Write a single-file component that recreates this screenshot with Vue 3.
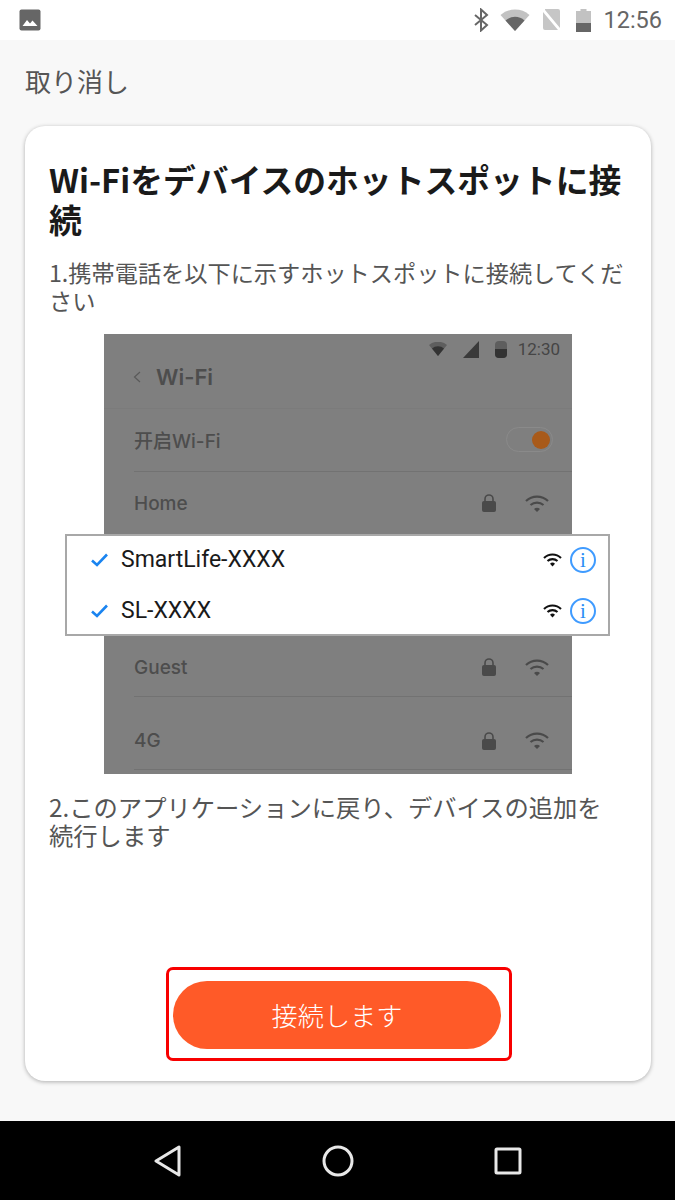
<script setup>
const upper = [{ name: '开启Wi-Fi', toggle: true, cls: 'switch-row' }, { name: 'Home', cls: 'home' }]
const lower = [{ name: 'Guest', cls: 'guest' }, { name: '4G', cls: 'fourg' }]
const networks = ['SmartLife-XXXX', 'SL-XXXX']
</script>

<template>
  <div class="page">
    <div class="status">
      <svg class="photo" width="22" height="22" viewBox="0 0 22 22">
        <rect x="0.5" y="0.5" width="21" height="21" rx="2" fill="#666" />
        <path d="M3.5 17 L8 11 L11 14.5 L13.5 11.5 L18.5 17 Z" fill="#fff" />
      </svg>
      <div class="status-right">
        <svg width="16" height="24" viewBox="0 0 16 24" fill="none" stroke="#666" stroke-width="2">
          <path d="M2 7 L14 17 L8 22.5 V1.5 L14 7 L2 17" />
        </svg>
        <svg width="30" height="22" viewBox="0 0 30 22">
          <path d="M0.5 6 A22 22 0 0 1 29.5 6 L15 22 Z" fill="#c2c2c2" />
          <path d="M5.5 11.5 A14 14 0 0 1 24.5 11.5 L15 22 Z" fill="#666" />
        </svg>
        <svg width="20" height="22" viewBox="0 0 20 22">
          <path d="M3 0 H16 Q18 0 18 2 V19 L3 1 Z M1 3 L16 21 H3 Q1 21 1 19 Z" fill="#c6c6c6" />
          <path d="M1 1 L19 22" stroke="#fff" stroke-width="1" />
        </svg>
        <svg width="15" height="23" viewBox="0 0 15 23">
          <path d="M4.5 0 H10.5 V2 H15 V23 H0 V2 H4.5 Z" fill="#c2c2c2" />
          <rect y="14" width="15" height="9" fill="#666" />
        </svg>
        <span class="clock">12:56</span>
      </div>
    </div>

    <div class="cancel">取り消し</div>

    <main class="card">
      <h1 class="title">Wi-Fiをデバイスのホットスポットに接続</h1>
      <p class="step first">1.携帯電話を以下に示すホットスポットに接続してください</p>

      <div class="shot">
        <div class="shot-status">
          <svg width="18" height="14" viewBox="0 0 18 14">
            <path d="M0 3 A14 14 0 0 1 18 3 L9 14 Z" fill="#5e5e5e" />
            <path d="M3 6.5 A9 9 0 0 1 15 6.5 L9 14 Z" fill="#333" />
          </svg>
          <svg width="16" height="17" viewBox="0 0 16 17">
            <path d="M16 0 V17 H0 Z" fill="#3a3a3a" />
          </svg>
          <svg width="12" height="17" viewBox="0 0 12 17">
            <rect width="12" height="17" rx="4" fill="#5e5e5e" />
            <path d="M0 8 H12 V13 Q12 17 8 17 H4 Q0 17 0 13 Z" fill="#333" />
          </svg>
          <span class="shot-clock">12:30</span>
        </div>
        <div class="shot-nav">
          <svg width="8" height="12" viewBox="0 0 8 12" fill="none" stroke="#5a5a5a" stroke-width="1.2">
            <path d="M7 1 L1.5 6 L7 11" />
          </svg>
          <span>Wi-Fi</span>
        </div>
        <div v-for="row in upper" :key="row.name" class="shot-row" :class="row.cls">
          <span>{{ row.name }}</span>
          <span v-if="row.toggle" class="toggle"><i></i></span>
          <span v-else class="marks">
            <svg width="14" height="18" viewBox="0 0 14 18">
              <path d="M3 8 V5 A4 4 0 0 1 11 5 V8" fill="none" stroke="#4a4a4a" stroke-width="1.6" />
              <rect y="7" width="14" height="11" rx="2" fill="#4a4a4a" />
            </svg>
            <svg width="24" height="17" viewBox="0 0 24 17" fill="none" stroke="#4a4a4a" stroke-width="2.2">
              <path d="M1 6 A16 16 0 0 1 23 6 M5.5 10 A10 10 0 0 1 18.5 10" />
              <path d="M9 14 L12 17 L15 14 A4.5 4.5 0 0 0 9 14 Z" fill="#4a4a4a" stroke="none" />
            </svg>
          </span>
        </div>
        <div class="shot-gap"></div>
        <div v-for="row in lower" :key="row.name" class="shot-row" :class="row.cls">
          <span>{{ row.name }}</span>
          <span class="marks">
            <svg width="14" height="18" viewBox="0 0 14 18">
              <path d="M3 8 V5 A4 4 0 0 1 11 5 V8" fill="none" stroke="#4a4a4a" stroke-width="1.6" />
              <rect y="7" width="14" height="11" rx="2" fill="#4a4a4a" />
            </svg>
            <svg width="24" height="17" viewBox="0 0 24 17" fill="none" stroke="#4a4a4a" stroke-width="2.2">
              <path d="M1 6 A16 16 0 0 1 23 6 M5.5 10 A10 10 0 0 1 18.5 10" />
              <path d="M9 14 L12 17 L15 14 A4.5 4.5 0 0 0 9 14 Z" fill="#4a4a4a" stroke="none" />
            </svg>
          </span>
        </div>

        <div class="popup">
          <div v-for="net in networks" :key="net" class="net">
            <svg class="check" width="17" height="14" viewBox="0 0 17 14" fill="none" stroke="#1a84f0" stroke-width="2.6">
              <path d="M1 7.5 L6 12 L16 1.5" />
            </svg>
            <span class="net-name">{{ net }}</span>
            <svg class="net-wifi" width="19" height="14" viewBox="0 0 19 14" fill="none" stroke="#111" stroke-width="2.1">
              <path d="M1 5 A12 12 0 0 1 18 5 M4.5 8 A7.5 7.5 0 0 1 14.5 8" />
              <path d="M7 10.8 L9.5 13.5 L12 10.8 A3.6 3.6 0 0 0 7 10.8 Z" fill="#111" stroke="none" />
            </svg>
            <span class="info">i</span>
          </div>
        </div>
      </div>

      <p class="step second">2.このアプリケーションに戻り、デバイスの追加を続行します</p>

      <div class="action">
        <button class="connect" type="button">接続します</button>
      </div>
    </main>

    <div class="foot"></div>

    <nav class="softkeys">
      <svg width="28" height="32" viewBox="0 0 28 32" fill="none" stroke="#e8e8e8" stroke-width="3" stroke-linejoin="round">
        <path d="M25 2 V30 L2 16 Z" />
      </svg>
      <svg width="32" height="32" viewBox="0 0 32 32" fill="none" stroke="#e8e8e8" stroke-width="3">
        <circle cx="16" cy="16" r="14" />
      </svg>
      <svg width="28" height="28" viewBox="0 0 28 28" fill="none" stroke="#e8e8e8" stroke-width="3" stroke-linejoin="round">
        <rect x="2" y="2" width="24" height="24" rx="1" />
      </svg>
    </nav>
  </div>
</template>

<style scoped>
.page {
  width: 675px;
  height: 1200px;
  display: flex;
  flex-direction: column;
  background: #f8f8f8;
  font-family: "Noto Sans CJK JP", "Noto Sans", sans-serif;
  overflow: hidden;
}
.status {
  height: 40px;
  flex: none;
  background: #fff;
  display: flex;
  align-items: center;
  justify-content: space-between;
  padding: 0 13px 0 19px;
  box-sizing: border-box;
}
.status-right {
  display: flex;
  align-items: center;
}
.status-right svg:nth-child(1) { margin-right: 11px; }
.status-right svg:nth-child(2) { margin-right: 12px; }
.status-right svg:nth-child(3) { margin-right: 14px; }
.status-right svg:nth-child(4) { margin-right: 12px; }
.clock {
  font-family: Roboto, sans-serif;
  font-size: 23.5px;
  color: #666;
  line-height: 1;
  padding-top: 2px;
}
.cancel {
  flex: none;
  height: 86px;
  box-sizing: border-box;
  padding: 23px 0 0 25px;
  font-size: 26px;
  line-height: 36px;
  color: #555;
}
.card {
  flex: 1;
  margin: 0 24px 0 25px;
  background: #fff;
  border-radius: 20px;
  box-shadow: 0 1px 4px rgba(0, 0, 0, 0.3);
  padding: 33px 24px 20px;
  display: flex;
  flex-direction: column;
  min-height: 0;
}
.title {
  margin: 0;
  font-size: 32.8px;
  line-height: 40px;
  font-weight: 700;
  color: #1a1a1a;
}
.step {
  margin: 0;
  line-height: 28px;
  color: #555;
}
.first {
  margin-top: 19px;
  font-size: 23.2px;
}
.second {
  margin-top: 19px;
  font-size: 24.3px;
  padding-right: 4px;
}
.shot {
  position: relative;
  align-self: center;
  width: 468px;
  height: 440px;
  margin-top: 20px;
  background: #7f7f7f;
  font-family: Inter, "Noto Sans CJK SC", sans-serif;
  color: #4d4d4d;
  font-size: 19px;
  font-weight: 500;
  display: flex;
  flex-direction: column;
}
.shot-status {
  height: 30px;
  flex: none;
  display: flex;
  align-items: center;
  justify-content: flex-end;
  gap: 16px;
  padding-right: 12px;
}
.shot-clock {
  font-family: Roboto, sans-serif;
  font-size: 17px;
  font-weight: 400;
  color: #454545;
  margin-left: -5px;
}
.shot-nav {
  height: 44px;
  flex: none;
  box-sizing: border-box;
  padding: 0 0 18px 29px;
  display: flex;
  align-items: center;
  gap: 15px;
  font-size: 22px;
  font-weight: 600;
  color: #4d4d4d;
  box-shadow: 0 1px 0 rgba(0, 0, 0, 0.03);
}
.shot-row {
  height: 64px;
  flex: none;
  box-sizing: border-box;
  margin-left: 30px;
  padding-right: 23px;
  display: flex;
  align-items: center;
  justify-content: space-between;
}
.switch-row { border-bottom: 1px solid #727272; }
.home { padding-bottom: 2px; }
.shot-gap { height: 98px; flex: none; }
.guest {
  height: 63px;
  padding-top: 4px;
  border-bottom: 1px solid #727272;
}
.fourg {
  height: 73px;
  padding-top: 15px;
  border-bottom: 1px solid #727272;
}
.toggle {
  width: 47px;
  height: 25px;
  box-sizing: border-box;
  margin-right: -4px;
  border: 1px solid #8a8a8a;
  border-radius: 13px;
  display: flex;
  align-items: center;
  justify-content: flex-end;
  padding-right: 2px;
}
.toggle i {
  width: 18px;
  height: 18px;
  border-radius: 50%;
  background: #a85a1a;
}
.marks {
  display: flex;
  align-items: center;
  gap: 29px;
}
.popup {
  position: absolute;
  left: -39px;
  top: 200px;
  width: 545px;
  height: 102px;
  box-sizing: border-box;
  border: 2px solid #a8a8a8;
  background: #fff;
  display: flex;
  flex-direction: column;
  justify-content: center;
  font-family: Roboto, sans-serif;
  font-weight: 400;
}
.net {
  height: 51px;
  flex: none;
  display: flex;
  align-items: center;
  padding: 0 12px 0 24px;
  color: #1a1a1a;
}
.check { margin-right: 13px; }
.net-name {
  flex: 1;
  font-size: 23px;
}
.net-wifi { margin-right: 8px; }
.info {
  width: 26px;
  height: 26px;
  box-sizing: border-box;
  border: 2px solid #3f9bff;
  border-radius: 50%;
  color: #2a8df5;
  font-family: "Liberation Serif", serif;
  font-size: 21px;
  line-height: 22px;
  text-align: center;
}
.action {
  margin-top: auto;
  margin-left: 2px;
  align-self: center;
  width: 346px;
  height: 94px;
  box-sizing: border-box;
  border: 3px solid #f80000;
  border-radius: 7px;
  padding: 11px 8px 0 4px;
}
.connect {
  display: block;
  width: 100%;
  height: 68px;
  padding: 0;
  border: 0;
  border-radius: 34px;
  background: #ff5a28;
  color: #fff;
  font-family: inherit;
  font-size: 26.2px;
  font-weight: 300;
}
.foot { height: 40px; flex: none; }
.softkeys {
  height: 79px;
  flex: none;
  background: #000;
  box-sizing: border-box;
  padding: 0 153px 0 154px;
  display: flex;
  align-items: center;
  justify-content: space-between;
}
</style>
